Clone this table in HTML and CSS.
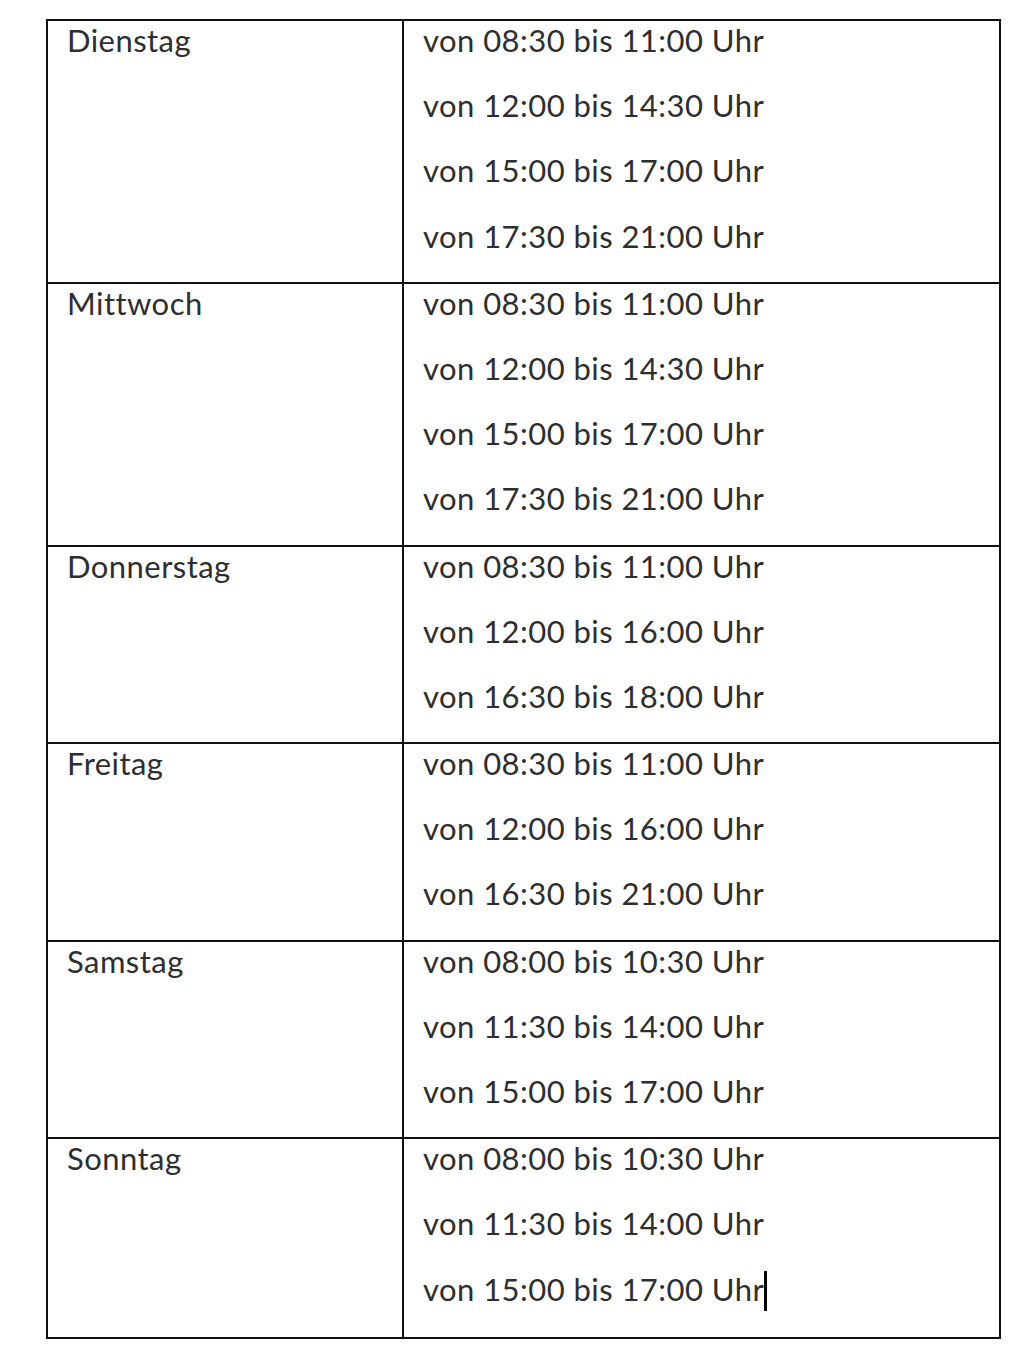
FILE: index.html
```html
<!DOCTYPE html>
<html lang="de">
<head>
<meta charset="utf-8">
<title>Öffnungszeiten</title>
<link rel="stylesheet" href="styles.css">
</head>
<body>
<table class="hours">
  <tr>
    <td class="day"><div class="line">Dienstag</div></td>
    <td class="times">
      <div class="line">von 08:30 bis 11:00 Uhr</div>
      <div class="line">von 12:00 bis 14:30 Uhr</div>
      <div class="line">von 15:00 bis 17:00 Uhr</div>
      <div class="line">von 17:30 bis 21:00 Uhr</div>
    </td>
  </tr>
  <tr>
    <td class="day"><div class="line">Mittwoch</div></td>
    <td class="times">
      <div class="line">von 08:30 bis 11:00 Uhr</div>
      <div class="line">von 12:00 bis 14:30 Uhr</div>
      <div class="line">von 15:00 bis 17:00 Uhr</div>
      <div class="line">von 17:30 bis 21:00 Uhr</div>
    </td>
  </tr>
  <tr>
    <td class="day"><div class="line">Donnerstag</div></td>
    <td class="times">
      <div class="line">von 08:30 bis 11:00 Uhr</div>
      <div class="line">von 12:00 bis 16:00 Uhr</div>
      <div class="line">von 16:30 bis 18:00 Uhr</div>
    </td>
  </tr>
  <tr>
    <td class="day"><div class="line">Freitag</div></td>
    <td class="times">
      <div class="line">von 08:30 bis 11:00 Uhr</div>
      <div class="line">von 12:00 bis 16:00 Uhr</div>
      <div class="line">von 16:30 bis 21:00 Uhr</div>
    </td>
  </tr>
  <tr>
    <td class="day"><div class="line">Samstag</div></td>
    <td class="times">
      <div class="line">von 08:00 bis 10:30 Uhr</div>
      <div class="line">von 11:30 bis 14:00 Uhr</div>
      <div class="line">von 15:00 bis 17:00 Uhr</div>
    </td>
  </tr>
  <tr class="last">
    <td class="day"><div class="line">Sonntag</div></td>
    <td class="times">
      <div class="line">von 08:00 bis 10:30 Uhr</div>
      <div class="line">von 11:30 bis 14:00 Uhr</div>
      <div class="line">von 15:00 bis 17:00 Uhr<span class="caret"></span></div>
    </td>
  </tr>
</table>
</body>
</html>
```
FILE: styles.css
```css
html, body {
  margin: 0;
  padding: 0;
  background: #ffffff;
}
body {
  padding: 19px 0 0 46px;
}
.hours {
  border-collapse: collapse;
  width: 955px;
  font-family: Lato, "Open Sans", sans-serif;
  font-size: 31px;
  letter-spacing: 0.45px;
  color: #2e2e2e;
}
.hours td {
  border: 2px solid #111111;
  vertical-align: top;
  padding: 0;
}
.hours td.day {
  width: 335px;
  padding-left: 19px;
}
.hours td.times {
  padding-left: 19px;
}
.line {
  height: 65.2px;
  padding-top: 1px;
  box-sizing: border-box;
  line-height: 1.2;
  white-space: nowrap;
}
.last td {
  padding-bottom: 2px;
}
.caret {
  display: inline-block;
  width: 3px;
  height: 40px;
  background: #000000;
  vertical-align: -10px;
  margin-left: 0;
}
```
